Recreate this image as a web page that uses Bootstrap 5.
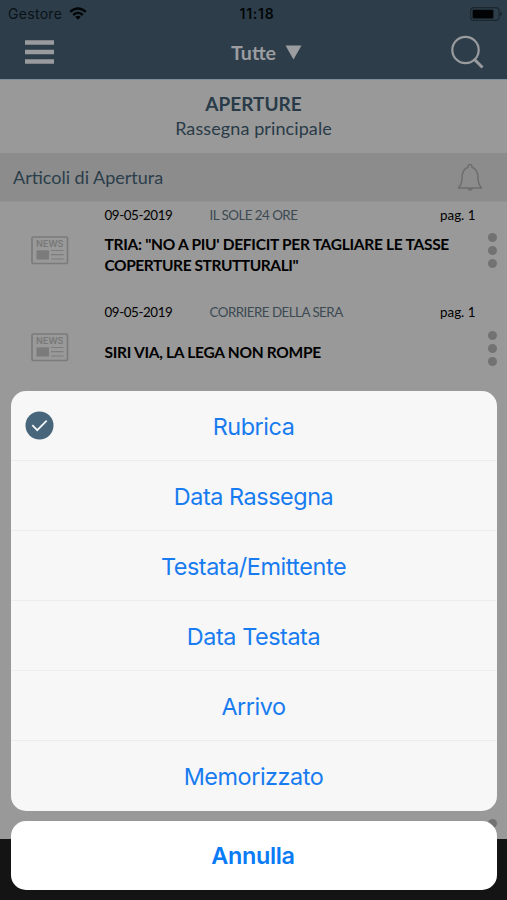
<!DOCTYPE html>
<html lang="it">
<head>
<meta charset="utf-8">
<meta name="viewport" content="width=device-width, initial-scale=1">
<title>Rassegna principale</title>
<link href="https://cdn.jsdelivr.net/npm/bootstrap@5.3.0/dist/css/bootstrap.min.css" rel="stylesheet">
<style>
body{margin:0;background:#141414;overflow:hidden}
.screen{width:507px;height:900px;background:#141414;font-family:Lato,"Open Sans",sans-serif;color:#000}
.topbar{height:79px;background:#2d3e4a}
.statusbar{height:27px;font-family:Inter,sans-serif;font-size:14px;line-height:27px}
.statusbar>*{flex:1 1 0}
.carrier{color:#0a1117;letter-spacing:.3px}
.wifi{margin-left:7px}
.clock{color:#030608;font-weight:600;letter-spacing:.8px;padding-left:3px}
.navrow{height:52px;padding-bottom:2px}
.navrow .nav-title{font-size:19.6px;font-weight:700;color:#9b9da0;line-height:24px;padding-left:31px;gap:9px;padding-top:1px}
.feed{height:760px;background:#999}
.feed-head{height:73.5px;border-top:1px solid #7e8c95;color:#293b48;padding-top:11px}
.feed-head h1{font-size:19px;line-height:25.400px;font-weight:700;letter-spacing:0}
.feed-head p{font-size:18px;line-height:24px;letter-spacing:.1px}
.section-bar{height:49px;background:#8c8c8c;color:#2b3e4b;font-size:18px;border-bottom:1px solid #939393;padding:2px 24px 0 13px}
.article{height:97.6px;padding:3px 0 0 104.5px}
.meta{height:20px;font-size:13.4px;line-height:20px;letter-spacing:-.42px}
.date{width:105px}
.source{color:#3c4a53;letter-spacing:-.54px}
.pag{width:67px;letter-spacing:0}
.thumb{width:104px;margin-left:-104px;padding-left:30.5px;padding-top:2.5px}
.headline{font-size:15.5px;line-height:21px;font-weight:700;height:42px;width:366px;letter-spacing:-.28px;padding-top:1px}
.headline .tail{letter-spacing:-.42px}
.rowbody{margin-top:8.500px;height:44px}
.dots{width:37px;padding-left:17px}
.sheet{position:absolute;left:11px;right:10px;top:391px;font-family:Inter,sans-serif}
.choices{height:419.5px;border-radius:15px;background:#f7f7f7;overflow:hidden}
.choice{flex:1 1 0;color:#187cf0;font-size:23.4px;letter-spacing:-.44px;border:0;border-bottom:1px solid #ededee;background:transparent;padding:2px 1px 0 0}
.choice:last-child{border-bottom:0}
.tick{position:absolute;left:14px;top:20px}
.cancel{height:69.5px;margin-top:10px;border:0;border-radius:15px;background:#fff;color:#087bf5;font-size:23.4px;font-weight:600;letter-spacing:-.3px;padding:1px 2px 0 0}
.peek{position:absolute;left:487.5px;top:819px}
</style>
</head>
<body>
<svg width="0" height="0" class="position-absolute" aria-hidden="true">
<defs>
<g id="news"><rect x="1" y="1" width="35.500" height="26.500" rx="1.200" fill="none" stroke="#7b7b7b" stroke-width="1.700"/><text x="5" y="11" font-family="Inter,sans-serif" font-size="8.600" font-weight="600" textLength="27.500" lengthAdjust="spacingAndGlyphs" fill="#787878">NEWS</text><rect x="5.500" y="14.300" width="12.500" height="9.200" fill="#7b7b7b"/><path d="M20 14.500h12.500M20 18.700h12.500M20 23h12.500" stroke="#7d7d7d" stroke-width="1.200"/></g>
<g id="dots3" fill="#727272"><circle cx="4.500" cy="4.500" r="4.500"/><circle cx="4.500" cy="17.500" r="4.500"/><circle cx="4.500" cy="30.500" r="4.500"/></g>
</defs>
</svg>
<div class="screen position-relative overflow-hidden">
<header class="topbar">
<div class="statusbar d-flex align-items-center">
<div class="d-flex align-items-center ps-2"><span class="carrier">Gestore</span>
<svg class="wifi" width="18" height="13" viewBox="0 0 18 13"><g fill="none" stroke="#030608" stroke-width="2.400"><path d="M1.200 4.800Q9-2 16.800 4.800"/><path d="M4.200 8Q9 3.700 13.800 8"/></g><path d="M6.200 9.800Q9 7.700 11.800 9.800L9 12.700Z" fill="#030608"/></svg></div>
<div class="clock text-center">11:18</div>
<div class="d-flex justify-content-end align-items-center pe-1"><svg width="33" height="14" viewBox="0 0 33 14"><rect x=".6" y=".6" width="28.500" height="12.800" rx="3.500" fill="none" stroke="#1b262e" stroke-width="1.200"/><rect x="2.600" y="2.700" width="20.800" height="8.700" rx="1" fill="#020304"/><path d="M30.300 5v4q1.700-.5 1.700-2t-1.700-2" fill="#17212a"/></svg></div>
</div>
<div class="navrow d-flex justify-content-between align-items-center">
<svg class="ms-4" width="31" height="26" viewBox="0 0 31 26"><path d="M1 3.500h29M1 13h29M1 22.500h29" stroke="#999b9e" stroke-width="4.300"/></svg>
<div class="nav-title d-flex align-items-center"><span>Tutte</span><svg width="17" height="15" viewBox="0 0 17 15"><path d="M.5.500h16L8.500 14.500Z" fill="#9b9da0"/></svg></div>
<svg class="me-3" width="44" height="36" viewBox="0 0 44 36"><circle cx="18.500" cy="16" r="13.200" fill="none" stroke="#999b9e" stroke-width="2.200"/><path d="M27 25L35.500 33.500" stroke="#999b9e" stroke-width="3"/></svg>
</div>
</header>
<main class="feed">
<div class="feed-head text-center"><h1 class="m-0">APERTURE</h1><p class="m-0">Rassegna principale</p></div>
<div class="section-bar d-flex align-items-center justify-content-between"><span>Articoli di Apertura</span>
<svg width="26" height="29" viewBox="0 0 26 29"><path d="M11 4.300Q11 1.500 13 1.500T15 4.300C20 6 21 10 21 15C21 20 22 22 24.500 25H1.500C4 22 5 20 5 15C5 10 6 6 11 4.300Z" fill="none" stroke="#6e6e6e" stroke-width="1.500" stroke-linejoin="round"/><path d="M10 25.500Q13 30 16 25.500Z" fill="#6e6e6e"/></svg></div>
<article class="article">
<div class="meta d-flex"><span class="date">09-05-2019</span><span class="source flex-grow-1">IL SOLE 24 ORE</span><span class="pag">pag. 1</span></div>
<div class="rowbody d-flex"><div class="thumb flex-shrink-0"><svg width="38" height="29"><use href="#news"/></svg></div>
<div class="headline flex-shrink-0 d-flex align-items-center"><div>TRIA: "NO A PIU' DEFICIT PER TAGLIARE LE TASSE<br><span class="tail">COPERTURE STRUTTURALI"</span></div></div>
<div class="dots flex-shrink-0"><svg width="9" height="35"><use href="#dots3"/></svg></div></div>
</article>
<article class="article">
<div class="meta d-flex"><span class="date">09-05-2019</span><span class="source flex-grow-1">CORRIERE DELLA SERA</span><span class="pag">pag. 1</span></div>
<div class="rowbody d-flex"><div class="thumb flex-shrink-0"><svg width="38" height="29"><use href="#news"/></svg></div>
<div class="headline flex-shrink-0 d-flex align-items-center"><div>SIRI VIA, LA LEGA NON ROMPE</div></div>
<div class="dots flex-shrink-0"><svg width="9" height="35"><use href="#dots3"/></svg></div></div>
</article>
</main>
<svg class="peek" width="9" height="9"><circle cx="4.500" cy="4.500" r="4.500" fill="#727272"/></svg>
<div class="sheet">
<div class="choices d-flex flex-column position-relative">
<svg class="tick" width="29" height="29" viewBox="0 0 29 29"><circle cx="14.500" cy="14.500" r="14" fill="#48667b"/><path d="M7.300 14.200L12.200 19.200L21.700 9.700" fill="none" stroke="#f5f7f8" stroke-width="1.700"/></svg>
<button class="choice">Rubrica</button><button class="choice">Data Rassegna</button><button class="choice">Testata/Emittente</button><button class="choice">Data Testata</button><button class="choice">Arrivo</button><button class="choice">Memorizzato</button>
</div>
<button class="cancel w-100">Annulla</button>
</div>
</div>
<script src="https://cdn.jsdelivr.net/npm/bootstrap@5.3.0/dist/js/bootstrap.bundle.min.js"></script>
</body>
</html>
